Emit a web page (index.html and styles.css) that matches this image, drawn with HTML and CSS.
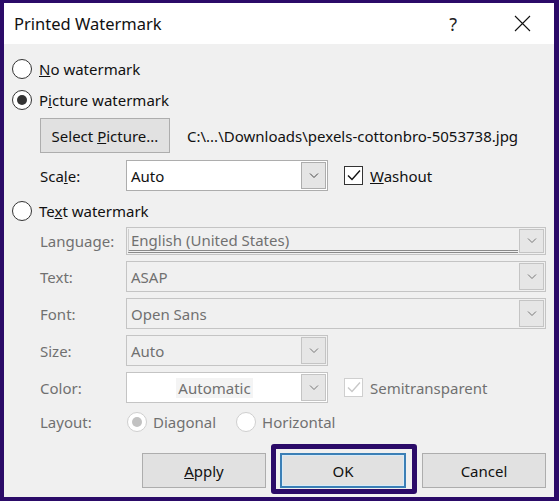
FILE: index.html
```html
<!DOCTYPE html>
<html lang="en">
<head>
    <meta charset="UTF-8">
    <meta name="viewport" content="width=device-width, initial-scale=1.0">
    <title>Printed Watermark</title>
    <link rel="stylesheet" href="styles.css">
</head>
<body>
    <div class="window">
        <div class="titlebar">
            <span class="title">Printed Watermark</span>
            <span class="help">?</span>
            <span class="close">
                <svg width="17" height="17" viewBox="0 0 17 17"><path d="M1 1L16 16M16 1L1 16" stroke="#111" stroke-width="1.1" fill="none"/></svg>
            </span>
        </div>

        <div class="content">
            <div class="row option row-none">
                <span class="radio"></span>
                <span><u>N</u>o watermark</span>
            </div>
            <div class="row option row-picture">
                <span class="radio checked"></span>
                <span>P<u>i</u>cture watermark</span>
            </div>
            <div class="row indent row-select">
                <button class="btn select-pic">Select <u>P</u>icture...</button>
                <span class="path">C:\...\Downloads\pexels-cottonbro-5053738.jpg</span>
            </div>
            <div class="row indent row-field row-scale">
                <span class="label">Sca<u>l</u>e:</span>
                <div class="combo short">
                    <span class="value">Auto</span>
                    <span class="drop"><svg width="10" height="6" viewBox="0 0 10 6"><path d="M1 0.5L5 4.5L9 0.5" stroke="#444" fill="none"/></svg></span>
                </div>
                <span class="check checked">
                    <svg width="17" height="17" viewBox="0 0 17 17"><path d="M3 8.5L7 12.5L15 3.5" stroke="#111" stroke-width="1.4" fill="none"/></svg>
                </span>
                <span><u>W</u>ashout</span>
            </div>
            <div class="row option row-text">
                <span class="radio"></span>
                <span>Te<u>x</u>t watermark</span>
            </div>

            <div class="row indent row-field row-language disabled">
                <span class="label">Language:</span>
                <div class="combo full editable">
                    <span class="value">English (United States)</span>
                    <span class="drop"><svg width="10" height="6" viewBox="0 0 10 6"><path d="M1 0.5L5 4.5L9 0.5" stroke="#777" fill="none"/></svg></span>
                </div>
            </div>
            <div class="row indent row-field disabled">
                <span class="label">Text:</span>
                <div class="combo full">
                    <span class="value">ASAP</span>
                    <span class="drop"><svg width="10" height="6" viewBox="0 0 10 6"><path d="M1 0.5L5 4.5L9 0.5" stroke="#777" fill="none"/></svg></span>
                </div>
            </div>
            <div class="row indent row-field disabled">
                <span class="label">Font:</span>
                <div class="combo full">
                    <span class="value">Open Sans</span>
                    <span class="drop"><svg width="10" height="6" viewBox="0 0 10 6"><path d="M1 0.5L5 4.5L9 0.5" stroke="#777" fill="none"/></svg></span>
                </div>
            </div>
            <div class="row indent row-field disabled">
                <span class="label">Size:</span>
                <div class="combo short">
                    <span class="value">Auto</span>
                    <span class="drop"><svg width="10" height="6" viewBox="0 0 10 6"><path d="M1 0.5L5 4.5L9 0.5" stroke="#777" fill="none"/></svg></span>
                </div>
            </div>
            <div class="row indent row-field disabled">
                <span class="label">Color:</span>
                <div class="combo short color">
                    <span class="value"><span class="swatch">Automatic</span></span>
                    <span class="drop"><svg width="10" height="6" viewBox="0 0 10 6"><path d="M1 0.5L5 4.5L9 0.5" stroke="#777" fill="none"/></svg></span>
                </div>
                <span class="check checked">
                    <svg width="17" height="17" viewBox="0 0 17 17"><path d="M3 8.5L7 12.5L15 3.5" stroke="#c8c8c8" stroke-width="1.4" fill="none"/></svg>
                </span>
                <span>Semitransparent</span>
            </div>
            <div class="row indent row-layout disabled">
                <span class="label">Layout:</span>
                <span class="radio checked"></span>
                <span class="radio-text">Diagonal</span>
                <span class="radio"></span>
                <span class="radio-text">Horizontal</span>
            </div>

            <div class="row buttons">
                <button class="btn"><u>A</u>pply</button>
                <button class="btn default">OK</button>
                <button class="btn">Cancel</button>
            </div>
        </div>
    </div>
</body>
</html>
```

FILE: styles.css
```css
body {
    margin: 0;
    padding: 0;
    font-family: "Noto Sans", "Open Sans", sans-serif;
    font-size: 15px;
    color: #111;
}

.window {
    box-sizing: border-box;
    width: 559px;
    height: 501px;
    border-style: solid;
    border-color: #2b0b68;
    border-width: 3px 5px 4px 4px;
    background-color: #f0f0f0;
    display: flex;
    flex-direction: column;
}

.titlebar {
    height: 41px;
    flex-shrink: 0;
    background-color: #fff;
    display: flex;
    align-items: center;
    padding-left: 10px;
}

.title {
    font-size: 16.5px;
    flex: 1;
}

.help {
    font-size: 18px;
    color: #222;
    margin-right: 57px;
}

.close {
    display: flex;
    margin-right: 23px;
}

.content {
    display: flex;
    flex-direction: column;
    padding: 0 8px;
}

.row {
    display: flex;
    align-items: center;
}

.option {
    height: 22px;
    margin-top: 9px;
}

.row-none {
    margin-top: 14px;
}

.option .radio {
    margin-right: 7px;
}

.indent {
    padding-left: 28px;
}

.row-select {
    height: 35px;
    margin-top: 7px;
}

.row-field {
    height: 31px;
    margin-top: 6px;
}

.row-scale {
    margin-top: 7px;
}

.row-language {
    height: 28px;
    margin-top: 5px;
}

.label {
    width: 86px;
    flex-shrink: 0;
}

.radio {
    box-sizing: border-box;
    width: 20px;
    height: 20px;
    border: 1px solid #333;
    border-radius: 50%;
    background-color: #fff;
    display: flex;
    align-items: center;
    justify-content: center;
    flex-shrink: 0;
}

.radio.checked::after {
    content: "";
    width: 10px;
    height: 10px;
    border-radius: 50%;
    background-color: #333;
}

.check {
    box-sizing: border-box;
    width: 19px;
    height: 19px;
    border: 1px solid #333;
    background-color: #fff;
    display: flex;
    align-items: center;
    justify-content: center;
    margin: 0 7px 0 16px;
    flex-shrink: 0;
}

.btn {
    box-sizing: border-box;
    font-family: inherit;
    font-size: 15px;
    color: #111;
    background-color: #e1e1e1;
    border: 1px solid #adadad;
    height: 35px;
    padding: 0;
}

.select-pic {
    width: 130px;
    margin-right: 17px;
}

.combo {
    box-sizing: border-box;
    height: 100%;
    border: 1px solid #adadad;
    background-color: #fff;
    display: flex;
    align-items: stretch;
    padding: 1px;
}

.combo.short {
    width: 202px;
}

.combo.full {
    width: 420px;
}

.combo .value {
    flex: 1;
    display: flex;
    align-items: center;
    padding-left: 3px;
}

.combo .drop {
    width: 25px;
    box-sizing: border-box;
    border: 1px solid #adadad;
    background-color: #e5e5e5;
    display: flex;
    align-items: center;
    justify-content: center;
}

.disabled {
    color: #707070;
}

.disabled .combo {
    border-color: #c4c4c4;
    background-color: #f0f0f0;
}

.disabled .combo .drop {
    border-color: #c4c4c4;
    background-color: #e6e6e6;
}

.disabled .combo.color {
    background-color: #fff;
}

.combo.editable .value {
    border-left: 1px solid #cfcfcf;
    border-bottom: 3px double #8a8a8a;
    margin-right: 1px;
    padding-left: 2px;
}

.combo.color .value {
    justify-content: center;
    padding-left: 0;
}

.swatch {
    background-color: #f4f4f4;
    padding: 0 2px;
}

.disabled .check {
    border-color: #cfcfcf;
}

.disabled .radio {
    border-color: #cfcfcf;
}

.disabled .radio.checked::after {
    background-color: #c2c2c2;
}

.row-layout {
    height: 22px;
    margin-top: 8px;
}

.row-layout .label {
    width: 87px;
}

.radio-text {
    margin: 0 20px 0 6px;
}

.buttons {
    margin-top: 20px;
    justify-content: flex-end;
    gap: 14px;
}

.buttons .btn {
    width: 124px;
}

.buttons .btn.default {
    width: 126px;
    border: 2px solid #3b7fb6;
    box-shadow: inset 0 0 0 1px #d8ebf8;
    position: relative;
    margin-right: 2px;
}

/* highlight frame drawn around the OK button */
.buttons .btn.default::after {
    content: "";
    position: absolute;
    top: -11px;
    left: -11px;
    right: -13px;
    bottom: -8px;
    border: 5px solid #2b0b68;
    border-radius: 3px;
}
```
